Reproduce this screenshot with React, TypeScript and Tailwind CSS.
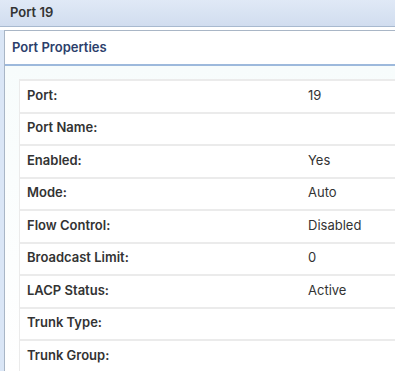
const rows: [string, string][] = [
  ["Port:", "19"],
  ["Port Name:", ""],
  ["Enabled:", "Yes"],
  ["Mode:", "Auto"],
  ["Flow Control:", "Disabled"],
  ["Broadcast Limit:", "0"],
  ["LACP Status:", "Active"],
  ["Trunk Type:", ""],
  ["Trunk Group:", ""],
];

export default function App() {
  return (
    <div className="w-[395px] h-[371px] overflow-hidden bg-white font-['Inter',sans-serif] text-[#333]">
      {/* title bar */}
      <div className="h-[27px] bg-gradient-to-b from-[#e0e9f6] to-[#d1ddef] border-b border-[#a8b9cf] flex items-center pl-[10px] text-[13px] font-semibold text-[#333]">
        Port 19
      </div>
      <div className="h-[3px] bg-white" />
      <div className="flex">
        <div className="w-[4px] bg-[#dae6f6] shrink-0 h-[341px]" />
        <div className="flex-1 border-l border-t border-[#a9b6c6]">
          {/* panel header */}
          <div className="h-[35px] flex items-center pl-[7px] text-[13px] font-semibold text-[#2c3e6b] border-b-2 border-[#9db9dc]">
            Port Properties
          </div>
          <div className="bg-gradient-to-b from-[#f7fcfc] to-white pt-[13px] pl-[14px]">
            <div className="w-[420px] border-l border-t-2 border-[#ebebeb] bg-white">
              {rows.map(([label, value]) => (
                <div
                  key={label}
                  className="h-[32.5px] pb-[2px] flex items-center border-b-2 border-[#ebebeb] text-[13px]"
                >
                  <div className="w-[288px] pl-[7px] font-semibold text-[#333]">{label}</div>
                  <div className="text-[#333]">{value}</div>
                </div>
              ))}
            </div>
          </div>
        </div>
      </div>
    </div>
  );
}
